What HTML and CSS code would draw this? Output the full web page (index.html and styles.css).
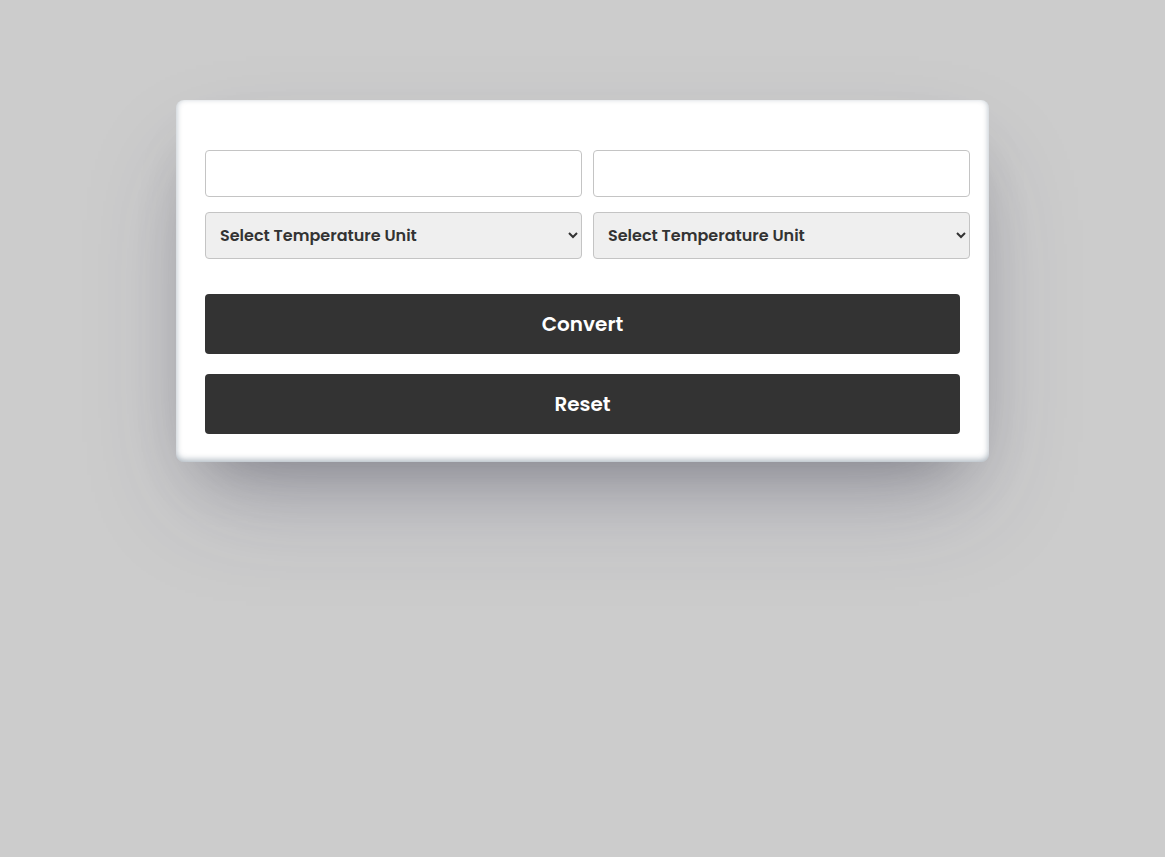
FILE: index.html
```html
<!DOCTYPE html>
<html lang="en">
<head>
  <meta charset="UTF-8">
  <meta name="viewport" content="width=device-width, initial-scale=1.0">
  <title>Temperature Converter</title>
  <link rel="stylesheet" href="styles.css">
</head>
<body>
  <div class="container">
    <div class="fields">
      <input type="number" id="from-value" class="field">
      <input type="number" id="to-value" class="field">
      <select id="from-unit" class="field unit">
        <option>Select Temperature Unit</option>
        <option>Celsius</option>
        <option>Fahrenheit</option>
        <option>Kelvin</option>
      </select>
      <select id="to-unit" class="field unit">
        <option>Select Temperature Unit</option>
        <option>Celsius</option>
        <option>Fahrenheit</option>
        <option>Kelvin</option>
      </select>
    </div>
    <button class="button" id="convert-btn">Convert</button>
    <button class="button" id="reset-btn">Reset</button>
  </div>
</body>
</html>
```

FILE: styles.css
```css
* {
  box-sizing: border-box;
  margin: 0;
  padding: 0;
}

html, body {
  min-height: 100vh;
}

body {
  font-family: Poppins, Inter, 'Open Sans', sans-serif;
  background-color: #cccccc;
  color: #333;
  padding-top: 100px;
}

.container {
  width: 813px;
  margin: 0 auto;
  background-color: white;
  border-radius: 8px;
  padding: 50px 29px 28px;
  box-shadow: rgba(50, 50, 93, 0.25) 0 50px 100px -20px,
              rgba(0, 0, 0, 0.3) 0 30px 60px -30px,
              rgba(10, 37, 64, 0.35) 0 -2px 6px 0 inset;
}

.fields {
  display: grid;
  grid-template-columns: 377px 377px;
  column-gap: 11px;
  row-gap: 15px;
  margin-bottom: 35px;
}

.field {
  height: 47px;
  border: 1px solid #c4c4c4;
  border-radius: 4px;
  background-color: white;
  font-family: inherit;
  font-size: 16px;
  padding: 0 10px;
}

.unit {
  background-color: #efefef;
  font-weight: 600;
  color: #333;
}

.button {
  display: block;
  width: 100%;
  height: 60px;
  background-color: #333;
  color: white;
  border: none;
  border-radius: 4px;
  font-family: inherit;
  font-size: 20px;
  font-weight: 600;
  cursor: pointer;
  margin-bottom: 20px;
}

.button:last-child {
  margin-bottom: 0;
}
```
